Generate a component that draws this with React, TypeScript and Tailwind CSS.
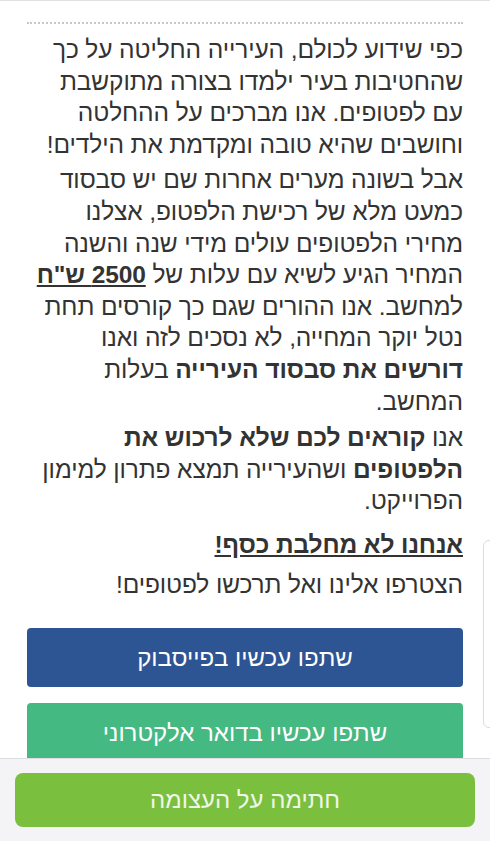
import React from 'react';

const font = { fontFamily: '"Liberation Sans", "DejaVu Sans", Arial, sans-serif' };

export default function App() {
  return (
    <div dir="rtl" className="relative h-[841px] overflow-hidden bg-white text-[#333333]" style={font}>
      <div className="border-t border-[#e2e2e2]" />
      <div className="px-[27px] pt-[21px]">
        <div className="border-t-2 border-dotted border-[#c8c8c8]" />

        <div className="pt-[10px] text-[24.5px] leading-[31.6px] tracking-[-0.1px] whitespace-nowrap">
          <p>
            כפי שידוע לכולם, העירייה החליטה על כך
            <br />
            שהחטיבות בעיר ילמדו בצורה מתוקשבת
            <br />
            עם לפטופים. אנו מברכים על ההחלטה
            <br />
            וחושבים שהיא טובה ומקדמת את הילדים!
          </p>
          <p className="mt-[4px]">
            אבל בשונה מערים אחרות שם יש סבסוד
            <br />
            כמעט מלא של רכישת הלפטופ, אצלנו
            <br />
            מחירי הלפטופים עולים מידי שנה והשנה
            <br />
            המחיר הגיע לשיא עם עלות של{' '}
            <strong className="font-bold underline underline-offset-2">2500 ש"ח</strong>
            <br />
            למחשב. אנו ההורים שגם כך קורסים תחת
            <br />
            נטל יוקר המחייה, לא נסכים לזה ואנו
            <br />
            <strong className="font-bold">דורשים את סבסוד העירייה</strong> בעלות
            <br />
            המחשב.
          </p>
          <p className="mt-[5px]">
            אנו <strong className="font-bold">קוראים לכם שלא לרכוש את</strong>
            <br />
            <strong className="font-bold">הלפטופים</strong> ושהעירייה תמצא פתרון למימון
            <br />
            הפרוייקט.
          </p>
          <p className="mt-[12px] font-bold underline underline-offset-2">אנחנו לא מחלבת כסף!</p>
          <p className="mt-[8px]">הצטרפו אלינו ואל תרכשו לפטופים!</p>
        </div>

        <div className="mt-[28px] flex flex-col gap-[16px]">
          <button className="h-[59px] w-full rounded-[4px] bg-[#2e5593] text-[24px] text-white">
            שתפו עכשיו בפייסבוק
          </button>
          <button className="h-[59px] w-full rounded-[4px] bg-[#45b982] text-[24px] text-white">
            שתפו עכשיו בדואר אלקטרוני
          </button>
        </div>
      </div>

      <div className="absolute right-[-20px] top-[540px] h-[188px] w-[27px] rounded-[6px] border border-[#dcdcdc] bg-white" />

      <div className="absolute inset-x-0 bottom-0 h-[83px] border-t border-[#dedee2] bg-[#f4f4f7] px-[15px] pt-[14px]">
        <button className="h-[54px] w-full rounded-[8px] bg-[#7bbf3f] text-[24px] text-[#eef7e6]">
          חתימה על העצומה
        </button>
      </div>
    </div>
  );
}
